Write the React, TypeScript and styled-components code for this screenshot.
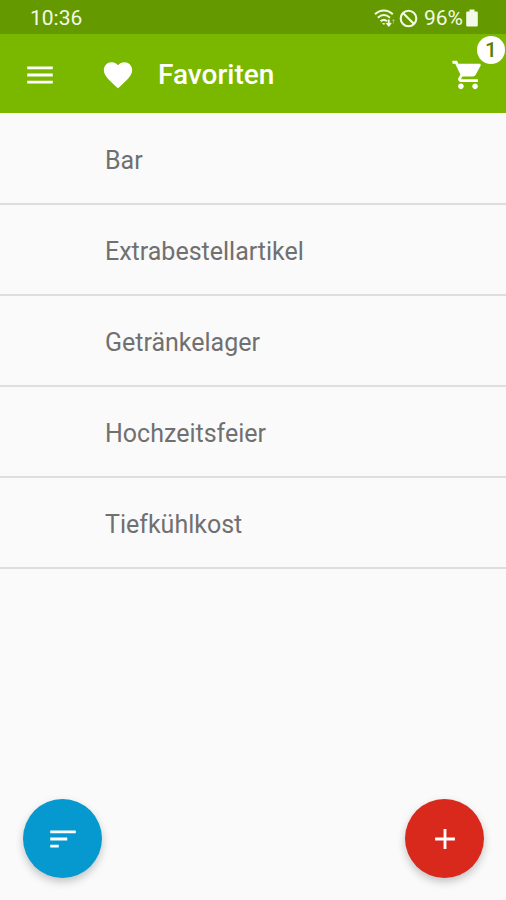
import React from "react";
import styled, { createGlobalStyle } from "styled-components";

const GlobalStyle = createGlobalStyle`
  *, *::before, *::after { box-sizing: border-box; }
  body {
    margin: 0;
    background: #fafafa;
    font-family: Roboto, "Liberation Sans", sans-serif;
  }
  button { font: inherit; }
`;

const Screen = styled.div`
  display: flex;
  flex-direction: column;
  min-height: 100vh;
`;

const StatusBar = styled.div`
  display: flex;
  align-items: center;
  justify-content: space-between;
  height: 34px;
  padding: 2px 28px 0 30px;
  background: #659900;
  color: #f4fae8;
  font-size: 21px;
  line-height: 24px;
`;

const StatusIcons = styled.div`
  display: flex;
  align-items: center;
  gap: 6px;
`;

const Signals = styled.div`
  display: flex;
  align-items: center;
  gap: 4px;
`;

const Battery = styled.div`
  display: flex;
  align-items: center;
  gap: 3px;
`;

const AppBar = styled.header`
  display: flex;
  align-items: center;
  height: 79px;
  padding: 2px 21px 0 23px;
  background: #7ab800;
  color: #ffffff;
`;

const IconButton = styled.button`
  position: relative;
  display: flex;
  padding: 0;
  border: 0;
  background: none;
  color: inherit;
  cursor: pointer;
`;

const Heading = styled.div`
  display: flex;
  flex: 1;
  align-items: center;
  gap: 23px;
  margin-left: 44px;
`;

const Title = styled.h1`
  margin: 0;
  font-size: 28px;
  font-weight: 500;
  line-height: 36px;
`;

const Badge = styled.span`
  position: absolute;
  top: -22px;
  right: -20px;
  display: flex;
  align-items: center;
  justify-content: center;
  width: 28px;
  height: 28px;
  border-radius: 50%;
  background: #ffffff;
  color: #568200;
  font-size: 21px;
  font-weight: 500;
  line-height: 28px;
`;

const List = styled.ul`
  flex: 1;
  margin: 0;
  padding: 1px 0 0;
  list-style: none;
`;

const Row = styled.li`
  border-bottom: 2px solid #dedede;
`;

const RowButton = styled.button`
  display: block;
  width: 100%;
  padding: 31px 24px 26px 105px;
  border: 0;
  background: none;
  color: #707070;
  font-size: 25px;
  line-height: 32px;
  text-align: left;
  cursor: pointer;
`;

const Actions = styled.div`
  position: sticky;
  bottom: 0;
  display: flex;
  justify-content: space-between;
  padding: 22px 22px 22px 23px;
`;

const Fab = styled.button<{ $color: string }>`
  display: flex;
  align-items: center;
  justify-content: center;
  width: 79px;
  height: 79px;
  padding: 0;
  border: 0;
  border-radius: 50%;
  background: ${(p) => p.$color};
  color: #ffffff;
  box-shadow: 0 4px 9px rgba(0, 0, 0, 0.22);
  cursor: pointer;
`;

const Icon = ({ d }: { d: string }) => (
  <svg width="34" height="34" viewBox="0 0 24 24" fill="currentColor" aria-hidden="true">
    <path d={d} />
  </svg>
);

const MENU = "M3 18h18v-2H3v2zm0-5h18v-2H3v2zm0-7v2h18V6H3z";
const HEART =
  "M12 21.35l-1.45-1.32C5.4 15.36 2 12.28 2 8.5 2 5.42 4.42 3 7.5 3c1.74 0 3.41.81 4.5 2.09C13.09 3.81 14.76 3 16.5 3 19.58 3 22 5.42 22 8.5c0 3.78-3.4 6.86-8.55 11.54L12 21.35z";
const CART =
  "M7 18c-1.1 0-1.99.9-1.99 2S5.9 22 7 22s2-.9 2-2-.9-2-2-2zM1 2v2h2l3.6 7.59-1.35 2.45c-.16.28-.25.61-.25.96 0 1.1.9 2 2 2h12v-2H7.42c-.14 0-.25-.11-.25-.25l.03-.12.9-1.63h7.45c.75 0 1.41-.41 1.75-1.03l3.58-6.49c.08-.14.12-.31.12-.48 0-.55-.45-1-1-1H5.21l-.94-2H1zm16 16c-1.1 0-1.99.9-1.99 2s.89 2 1.99 2 2-.9 2-2-.9-2-2-2z";
const SORT = "M3 18h6v-2H3v2zM3 6v2h18V6H3zm0 7h12v-2H3v2z";
const PLUS = "M19 13h-6v6h-2v-6H5v-2h6V5h2v6h6v2z";

const WifiIcon = () => (
  <svg width="21" height="20" viewBox="0 0 21 20" fill="none" stroke="currentColor" aria-hidden="true">
    <path d="M1 6.2C6.4 1.2 13.4 1.200 18.800 6.200" strokeWidth="2" />
    <path d="M3.800 9.800C7.600 6.400 12.200 6.400 16 9.800" strokeWidth="2" />
    <path d="M6.600 13.200C8.800 11.400 11 11.400 13.200 13.200" strokeWidth="2" />
    <path d="M7.800 14.800L9.900 17l1.600-1.600z" fill="currentColor" stroke="none" />
    <path d="M14.800 11.400v5.800M12.600 15l2.200 2.600 2.200-2.600" strokeWidth="1.800" />
    <path d="M19.400 15.600v-4M18.200 13l1.200-1.400 1.200 1.400" strokeWidth="1" opacity="0.4" />
  </svg>
);

const BlockedIcon = () => (
  <svg width="19" height="19" viewBox="0 0 19 19" fill="none" stroke="currentColor" strokeWidth="2.1" aria-hidden="true">
    <circle cx="9.5" cy="9.5" r="7.8" />
    <path d="M4 4l11 11" />
  </svg>
);

const BatteryIcon = () => (
  <svg width="12" height="18" viewBox="0 0 12 18" fill="currentColor" aria-hidden="true">
    <path d="M3.5 0.5h5v2h2a1.3 1.3 0 0 1 1.3 1.3v12.4a1.3 1.3 0 0 1-1.3 1.3h-9A1.3 1.3 0 0 1 .2 16.2V3.8A1.3 1.3 0 0 1 1.5 2.5h2z" />
  </svg>
);

const favourites = ["Bar", "Extrabestellartikel", "Getränkelager", "Hochzeitsfeier", "Tiefkühlkost"];

export default function App() {
  return (
    <Screen>
      <GlobalStyle />
      <StatusBar>
        <span>10:36</span>
        <StatusIcons>
          <Signals>
            <WifiIcon />
            <BlockedIcon />
          </Signals>
          <Battery>
            <span>96%</span>
            <BatteryIcon />
          </Battery>
        </StatusIcons>
      </StatusBar>
      <AppBar>
        <IconButton type="button" aria-label="Menü">
          <Icon d={MENU} />
        </IconButton>
        <Heading>
          <Icon d={HEART} />
          <Title>Favoriten</Title>
        </Heading>
        <IconButton type="button" aria-label="Warenkorb">
          <Icon d={CART} />
          <Badge>1</Badge>
        </IconButton>
      </AppBar>
      <List>
        {favourites.map((name) => (
          <Row key={name}>
            <RowButton type="button">{name}</RowButton>
          </Row>
        ))}
      </List>
      <Actions>
        <Fab type="button" $color="#0699d0" aria-label="Sortieren">
          <Icon d={SORT} />
        </Fab>
        <Fab type="button" $color="#d9291c" aria-label="Hinzufügen">
          <Icon d={PLUS} />
        </Fab>
      </Actions>
    </Screen>
  );
}
